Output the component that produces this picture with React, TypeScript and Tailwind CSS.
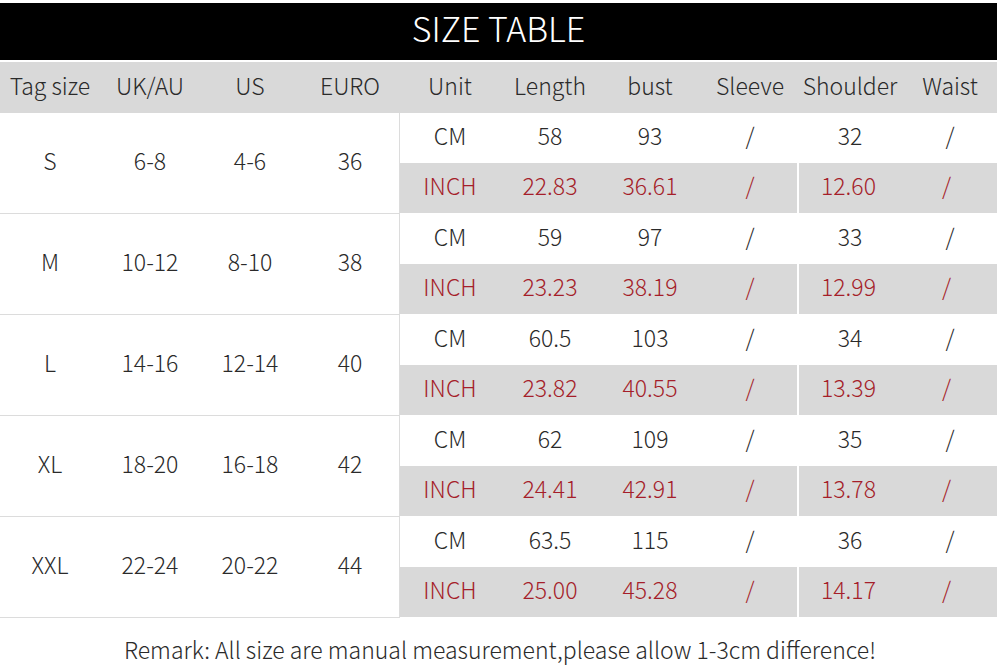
import React from "react";

const rows = [
  { tag: "S", uk: "6-8", us: "4-6", eu: "36", cm: ["58", "93", "/", "32", "/"], inch: ["22.83", "36.61", "/", "12.60", "/"] },
  { tag: "M", uk: "10-12", us: "8-10", eu: "38", cm: ["59", "97", "/", "33", "/"], inch: ["23.23", "38.19", "/", "12.99", "/"] },
  { tag: "L", uk: "14-16", us: "12-14", eu: "40", cm: ["60.5", "103", "/", "34", "/"], inch: ["23.82", "40.55", "/", "13.39", "/"] },
  { tag: "XL", uk: "18-20", us: "16-18", eu: "42", cm: ["62", "109", "/", "35", "/"], inch: ["24.41", "42.91", "/", "13.78", "/"] },
  { tag: "XXL", uk: "22-24", us: "20-22", eu: "44", cm: ["63.5", "115", "/", "36", "/"], inch: ["25.00", "45.28", "/", "14.17", "/"] },
];

const headers = ["Tag size", "UK/AU", "US", "EURO", "Unit", "Length", "bust", "Sleeve", "Shoulder", "Waist"];

const cell = "w-[100px] shrink-0 text-center text-[23px] font-light leading-none pb-[5px]";

export default function App() {
  return (
    <div
      className="w-[1000px] h-[666px] bg-white text-[#2a2a2a] overflow-hidden flex flex-col"
      style={{ fontFamily: '"Noto Sans CJK SC", "Noto Sans", sans-serif' }}
    >
      <div className="mt-[3px] h-[57px] w-[997px] bg-black flex items-center justify-center">
        <span className="text-white text-[34px] font-light leading-none pb-[7px]">SIZE TABLE</span>
      </div>
      <div className="mt-[2px] h-[51px] w-[997px] bg-[#d9d9d9] flex items-center">
        {headers.map((h) => (
          <div key={h} className={cell}>
            {h}
          </div>
        ))}
      </div>
      {rows.map((r) => (
        <div key={r.tag} className="flex h-[101px]">
          <div className="w-[400px] flex items-center border-b border-r border-[#dcdcdc]">
            {[r.tag, r.uk, r.us, r.eu].map((v, i) => (
              <div key={i} className={cell}>
                {v}
              </div>
            ))}
          </div>
          <div className="w-[597px] flex flex-col">
            <div className="h-[50px] flex items-center">
              <div className={cell}>CM</div>
              {r.cm.map((v, i) => (
                <div key={i} className={cell}>
                  {v}
                </div>
              ))}
            </div>
            <div className="h-[50px] flex text-[#a51e2a]">
              <div className="w-[397px] bg-[#d9d9d9] flex items-center">
                <div className={cell}>INCH</div>
                {r.inch.slice(0, 3).map((v, i) => (
                  <div key={i} className={cell}>
                    {v}
                  </div>
                ))}
              </div>
              <div className="w-[2px]" />
              <div className="w-[198px] bg-[#d9d9d9] flex items-center">
                <div className="w-[99px] shrink-0 text-center text-[23px] font-light leading-none pb-[5px]">{r.inch[3]}</div>
                <div className="w-[99px] shrink-0 text-center text-[23px] font-light leading-none pb-[5px] pr-[2px]">{r.inch[4]}</div>
              </div>
            </div>
          </div>
        </div>
      ))}
      <div className="flex-1 flex items-end justify-center pb-[5px]">
        <span className="text-[23px] font-light leading-none">
          Remark: All size are manual measurement,please allow 1-3cm difference!
        </span>
      </div>
    </div>
  );
}
